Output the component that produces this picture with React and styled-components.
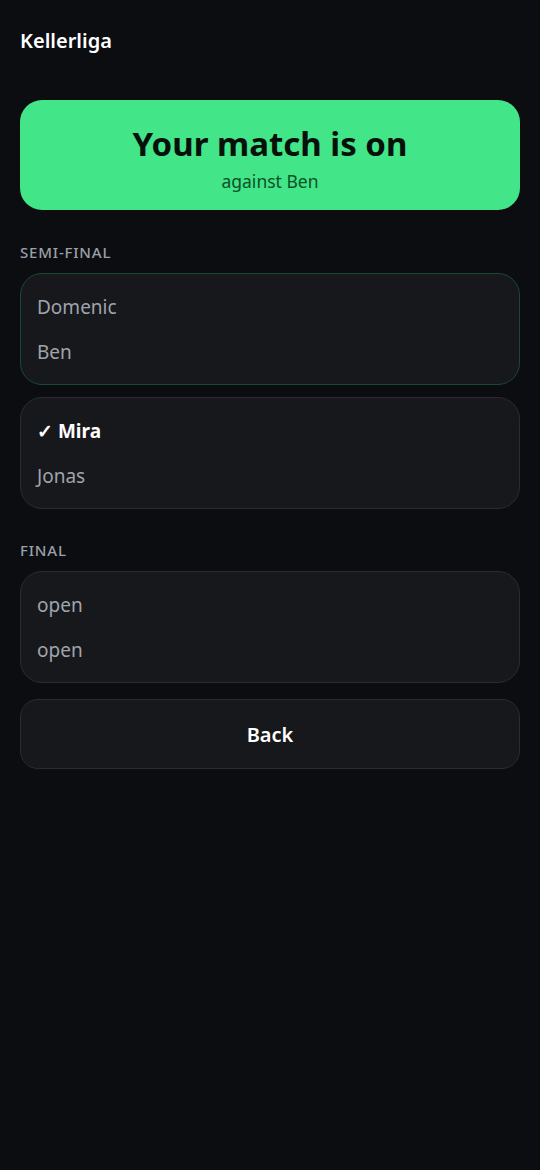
import React from 'react'
import styled, { createGlobalStyle } from 'styled-components'

const GlobalStyle = createGlobalStyle`
  html, body {
    margin: 0;
    padding: 0;
    background: #0b0d11;
  }
  body {
    font-family: "Noto Sans", "Open Sans", sans-serif;
    color: #f2f3f5;
  }
`

const Page = styled.div`
  min-height: 1170px;
  padding: 0 20px;
  box-sizing: border-box;
  background: #0b0d11;
  display: flex;
  flex-direction: column;
`

const Header = styled.h1`
  margin: 0;
  padding-top: 27px;
  font-size: 20px;
  line-height: 28px;
  font-weight: 600;
  color: #ffffff;
`

const Banner = styled.div`
  margin-top: 45px;
  height: 110px;
  box-sizing: border-box;
  padding-top: 6px;
  border-radius: 22px;
  background: #42e587;
  display: flex;
  flex-direction: column;
  align-items: center;
  justify-content: center;
`

const BannerTitle = styled.div`
  font-size: 33px;
  line-height: 40px;
  font-weight: 700;
  color: #07100a;
`

const BannerSub = styled.div`
  margin-top: 6px;
  font-size: 17.5px;
  line-height: 22px;
  color: #0d5128;
`

const Round = styled.section`
  margin-top: ${p => p.$top}px;
  display: flex;
  flex-direction: column;
  gap: 12px;
`

const SectionLabel = styled.div`
  margin-bottom: -1px;
  font-size: 15px;
  line-height: 20px;
  font-weight: 500;
  letter-spacing: 0.8px;
  text-transform: uppercase;
  color: #9ba0a8;
`

const MatchCard = styled.div`
  padding: 10px 16px;
  border-radius: 22px;
  background: #17181c;
  border: 1px solid ${p => (p.$active ? '#1a4a2e' : '#2a2c31')};
`

const Player = styled.div`
  height: 45px;
  display: flex;
  align-items: center;
  font-size: 19px;
  font-weight: ${p => (p.$winner ? 700 : 400)};
  color: ${p => (p.$winner ? '#ffffff' : '#a0a4ab')};
`

const BackButton = styled.button`
  display: block;
  width: 100%;
  height: 70px;
  margin-top: 16px;
  border-radius: 18px;
  border: 1px solid #2a2c31;
  background: #17181c;
  color: #ffffff;
  font-family: inherit;
  font-size: 20px;
  font-weight: 600;
`

const rounds = [
  {
    name: 'Semi-final',
    top: 32,
    matches: [
      { active: true, players: [{ name: 'Domenic' }, { name: 'Ben' }] },
      { players: [{ name: 'Mira', winner: true }, { name: 'Jonas' }] },
    ],
  },
  {
    name: 'Final',
    top: 31,
    matches: [{ players: [{ name: 'open' }, { name: 'open' }] }],
  },
]

export default function App() {
  return (
    <>
      <GlobalStyle />
      <Page>
        <Header>Kellerliga</Header>
        <Banner>
          <BannerTitle>Your match is on</BannerTitle>
          <BannerSub>against Ben</BannerSub>
        </Banner>
        {rounds.map(round => (
          <Round key={round.name} $top={round.top}>
            <SectionLabel>{round.name}</SectionLabel>
            {round.matches.map((m, i) => (
              <MatchCard key={i} $active={m.active}>
                {m.players.map((pl, j) => (
                  <Player key={j} $winner={pl.winner}>
                    {pl.winner ? '✓ ' : ''}
                    {pl.name}
                  </Player>
                ))}
              </MatchCard>
            ))}
          </Round>
        ))}
        <BackButton>Back</BackButton>
      </Page>
    </>
  )
}
